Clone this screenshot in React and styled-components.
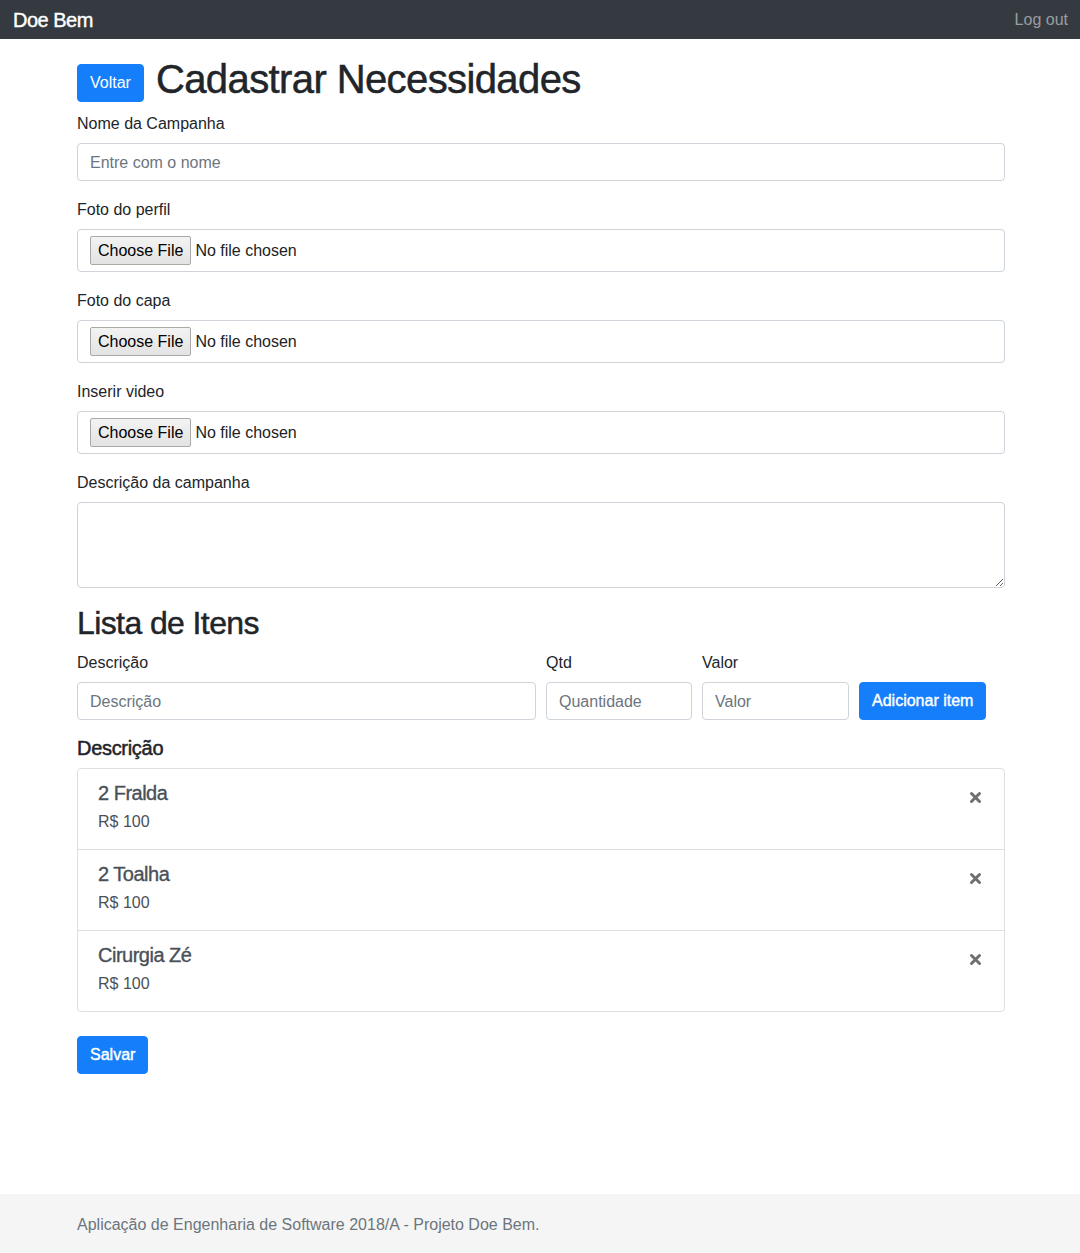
import styled, { createGlobalStyle } from "styled-components";

const GlobalStyle = createGlobalStyle`
  html, body {
    margin: 0;
    padding: 0;
  }
  body {
    font-family: "Liberation Sans", Arial, sans-serif;
    font-size: 16px;
    line-height: 1.5;
    color: #212529;
    background: #fff;
  }
  * {
    box-sizing: border-box;
  }
`;

const Page = styled.div`
  min-height: 100vh;
  display: flex;
  flex-direction: column;
`;

const Navbar = styled.nav`
  height: 39px;
  background-color: #343a40;
  display: flex;
  align-items: center;
  justify-content: space-between;
  padding: 0 12px 0 13px;
`;

const Brand = styled.span`
  color: #fff;
  font-size: 20px;
  line-height: 1;
  letter-spacing: -0.5px;
  -webkit-text-stroke: 0.4px #fff;
`;

const NavLink = styled.span`
  color: rgba(255, 255, 255, 0.5);
  font-size: 16px;
`;

const Main = styled.main`
  flex: 1;
  padding: 16px 75px 40px 77px;
`;

const TitleRow = styled.div`
  display: flex;
  align-items: flex-end;
  gap: 12px;
  margin-bottom: 8px;
`;

const Title = styled.h1`
  margin: 0;
  font-size: 40px;
  font-weight: 500;
  line-height: 1.2;
  letter-spacing: -0.6px;
  -webkit-text-stroke: 0.5px #212529;
`;

const Button = styled.button`
  font-family: inherit;
  font-size: 16px;
  line-height: 1.5;
  padding: 6px 12px;
  border: 1px solid #157ffb;
  border-radius: 4px;
  background-color: #157ffb;
  color: #fff;
  cursor: pointer;
  margin-bottom: ${(p) => p.$mb || 0}px;
  margin-top: ${(p) => p.$mt || 0}px;
  -webkit-text-stroke: ${(p) => (p.$strong ? "0.4px #fff" : "0")};
`;

const FormGroup = styled.div`
  margin-bottom: 16px;
`;

const Label = styled.label`
  display: block;
  padding-top: 1px;
  margin-bottom: 7px;
`;

const Input = styled.input`
  display: block;
  width: 100%;
  height: 38px;
  padding: 7px 12px 5px;
  font-family: inherit;
  font-size: 16px;
  line-height: 1.5;
  color: #495057;
  border: 1px solid #ced4da;
  border-radius: 4px;
  background: #fff;
  &::placeholder {
    color: #6c757d;
  }
`;

const TextArea = styled.textarea`
  display: block;
  width: 100%;
  height: 86px;
  padding: 6px 12px;
  font-family: inherit;
  font-size: 16px;
  line-height: 1.5;
  color: #495057;
  border: 1px solid #ced4da;
  border-radius: 4px;
`;

const FileBox = styled.div`
  display: flex;
  align-items: center;
  height: 43px;
  padding: 6px 12px;
  border: 1px solid #ced4da;
  border-radius: 4px;
  font-size: 16px;
  color: #222;
`;

const FileButton = styled.span`
  display: inline-flex;
  align-items: center;
  height: 29px;
  padding: 0 7px;
  background: linear-gradient(#f3f3f3, #e3e3e3);
  border: 1px solid #a9a9a9;
  border-radius: 2px;
  color: #000;
  margin-right: 4px;
`;

const SectionTitle = styled.h2`
  margin: 0 0 8px;
  font-size: 32px;
  font-weight: 500;
  line-height: 1.2;
  letter-spacing: -0.6px;
  -webkit-text-stroke: 0.45px #212529;
`;

const ItemForm = styled.div`
  display: grid;
  grid-template-columns: 459px 146px 147px auto;
  column-gap: 10px;
  align-items: end;
  margin-bottom: 16px;
`;

const Field = styled.div``;

const ListTitle = styled.h5`
  margin: 0 0 8px;
  font-size: 20px;
  font-weight: 500;
  line-height: 1.2;
  letter-spacing: -0.3px;
  -webkit-text-stroke: 0.5px #212529;
`;

const List = styled.ul`
  margin: 0;
  padding: 0;
  list-style: none;
  border: 1px solid rgba(0, 0, 0, 0.125);
  border-radius: 4px;
`;

const Item = styled.li`
  display: flex;
  justify-content: space-between;
  align-items: flex-start;
  padding: 12px 20px;
  color: #495057;
  & + & {
    border-top: 1px solid rgba(0, 0, 0, 0.125);
  }
`;

const ItemName = styled.h5`
  margin: 0 0 4px;
  font-size: 20px;
  font-weight: 500;
  line-height: 1.2;
  letter-spacing: -0.5px;
  -webkit-text-stroke: 0.35px #495057;
`;

const ItemPrice = styled.p`
  margin: 0 0 4px;
  padding-top: 1px;
  margin-bottom: 3px;
`;

const Remove = styled.span`
  display: inline-flex;
  margin-top: 10px;
  margin-right: 2px;
  cursor: pointer;
`;

const Footer = styled.footer`
  height: 59px;
  background-color: #f5f5f5;
  display: flex;
  align-items: center;
  padding: 2px 0 0 77px;
  color: #6c757d;
`;

function TimesIcon() {
  return (
    <svg width="13" height="13" viewBox="0 0 13 13">
      <path
        d="M2.5 2.5 L10.5 10.5 M10.5 2.5 L2.5 10.5"
        stroke="#6f6f6f"
        strokeWidth="3"
        strokeLinecap="round"
      />
    </svg>
  );
}

function FileField({ label }) {
  return (
    <FormGroup>
      <Label>{label}</Label>
      <FileBox>
        <FileButton>Choose File</FileButton>
        No file chosen
      </FileBox>
    </FormGroup>
  );
}

const items = [
  { nome: "2 Fralda", valor: 100 },
  { nome: "2 Toalha", valor: 100 },
  { nome: "Cirurgia Zé", valor: 100 },
];

export default function App() {
  return (
    <Page>
      <GlobalStyle />
      <Navbar>
        <Brand>Doe Bem</Brand>
        <NavLink>Log out</NavLink>
      </Navbar>
      <Main>
        <TitleRow>
          <Button $mb={1}>Voltar</Button>
          <Title>Cadastrar Necessidades</Title>
        </TitleRow>
        <FormGroup>
          <Label>Nome da Campanha</Label>
          <Input type="text" placeholder="Entre com o nome" />
        </FormGroup>
        <FileField label="Foto do perfil" />
        <FileField label="Foto do capa" />
        <FileField label="Inserir video" />
        <FormGroup>
          <Label>Descrição da campanha</Label>
          <TextArea rows={3} />
        </FormGroup>

        <SectionTitle>Lista de Itens</SectionTitle>
        <ItemForm>
          <Field>
            <Label>Descrição</Label>
            <Input placeholder="Descrição" />
          </Field>
          <Field>
            <Label>Qtd</Label>
            <Input placeholder="Quantidade" />
          </Field>
          <Field>
            <Label>Valor</Label>
            <Input placeholder="Valor" />
          </Field>
          <Field>
            <Button $strong>Adicionar item</Button>
          </Field>
        </ItemForm>

        <ListTitle>Descrição</ListTitle>
        <List>
          {items.map((item) => (
            <Item key={item.nome}>
              <div>
                <ItemName>{item.nome}</ItemName>
                <ItemPrice>R$ {item.valor}</ItemPrice>
              </div>
              <Remove>
                <TimesIcon />
              </Remove>
            </Item>
          ))}
        </List>
        <Button $mt={24} $strong>
          Salvar
        </Button>
      </Main>
      <Footer>Aplicação de Engenharia de Software 2018/A - Projeto Doe Bem.</Footer>
    </Page>
  );
}
